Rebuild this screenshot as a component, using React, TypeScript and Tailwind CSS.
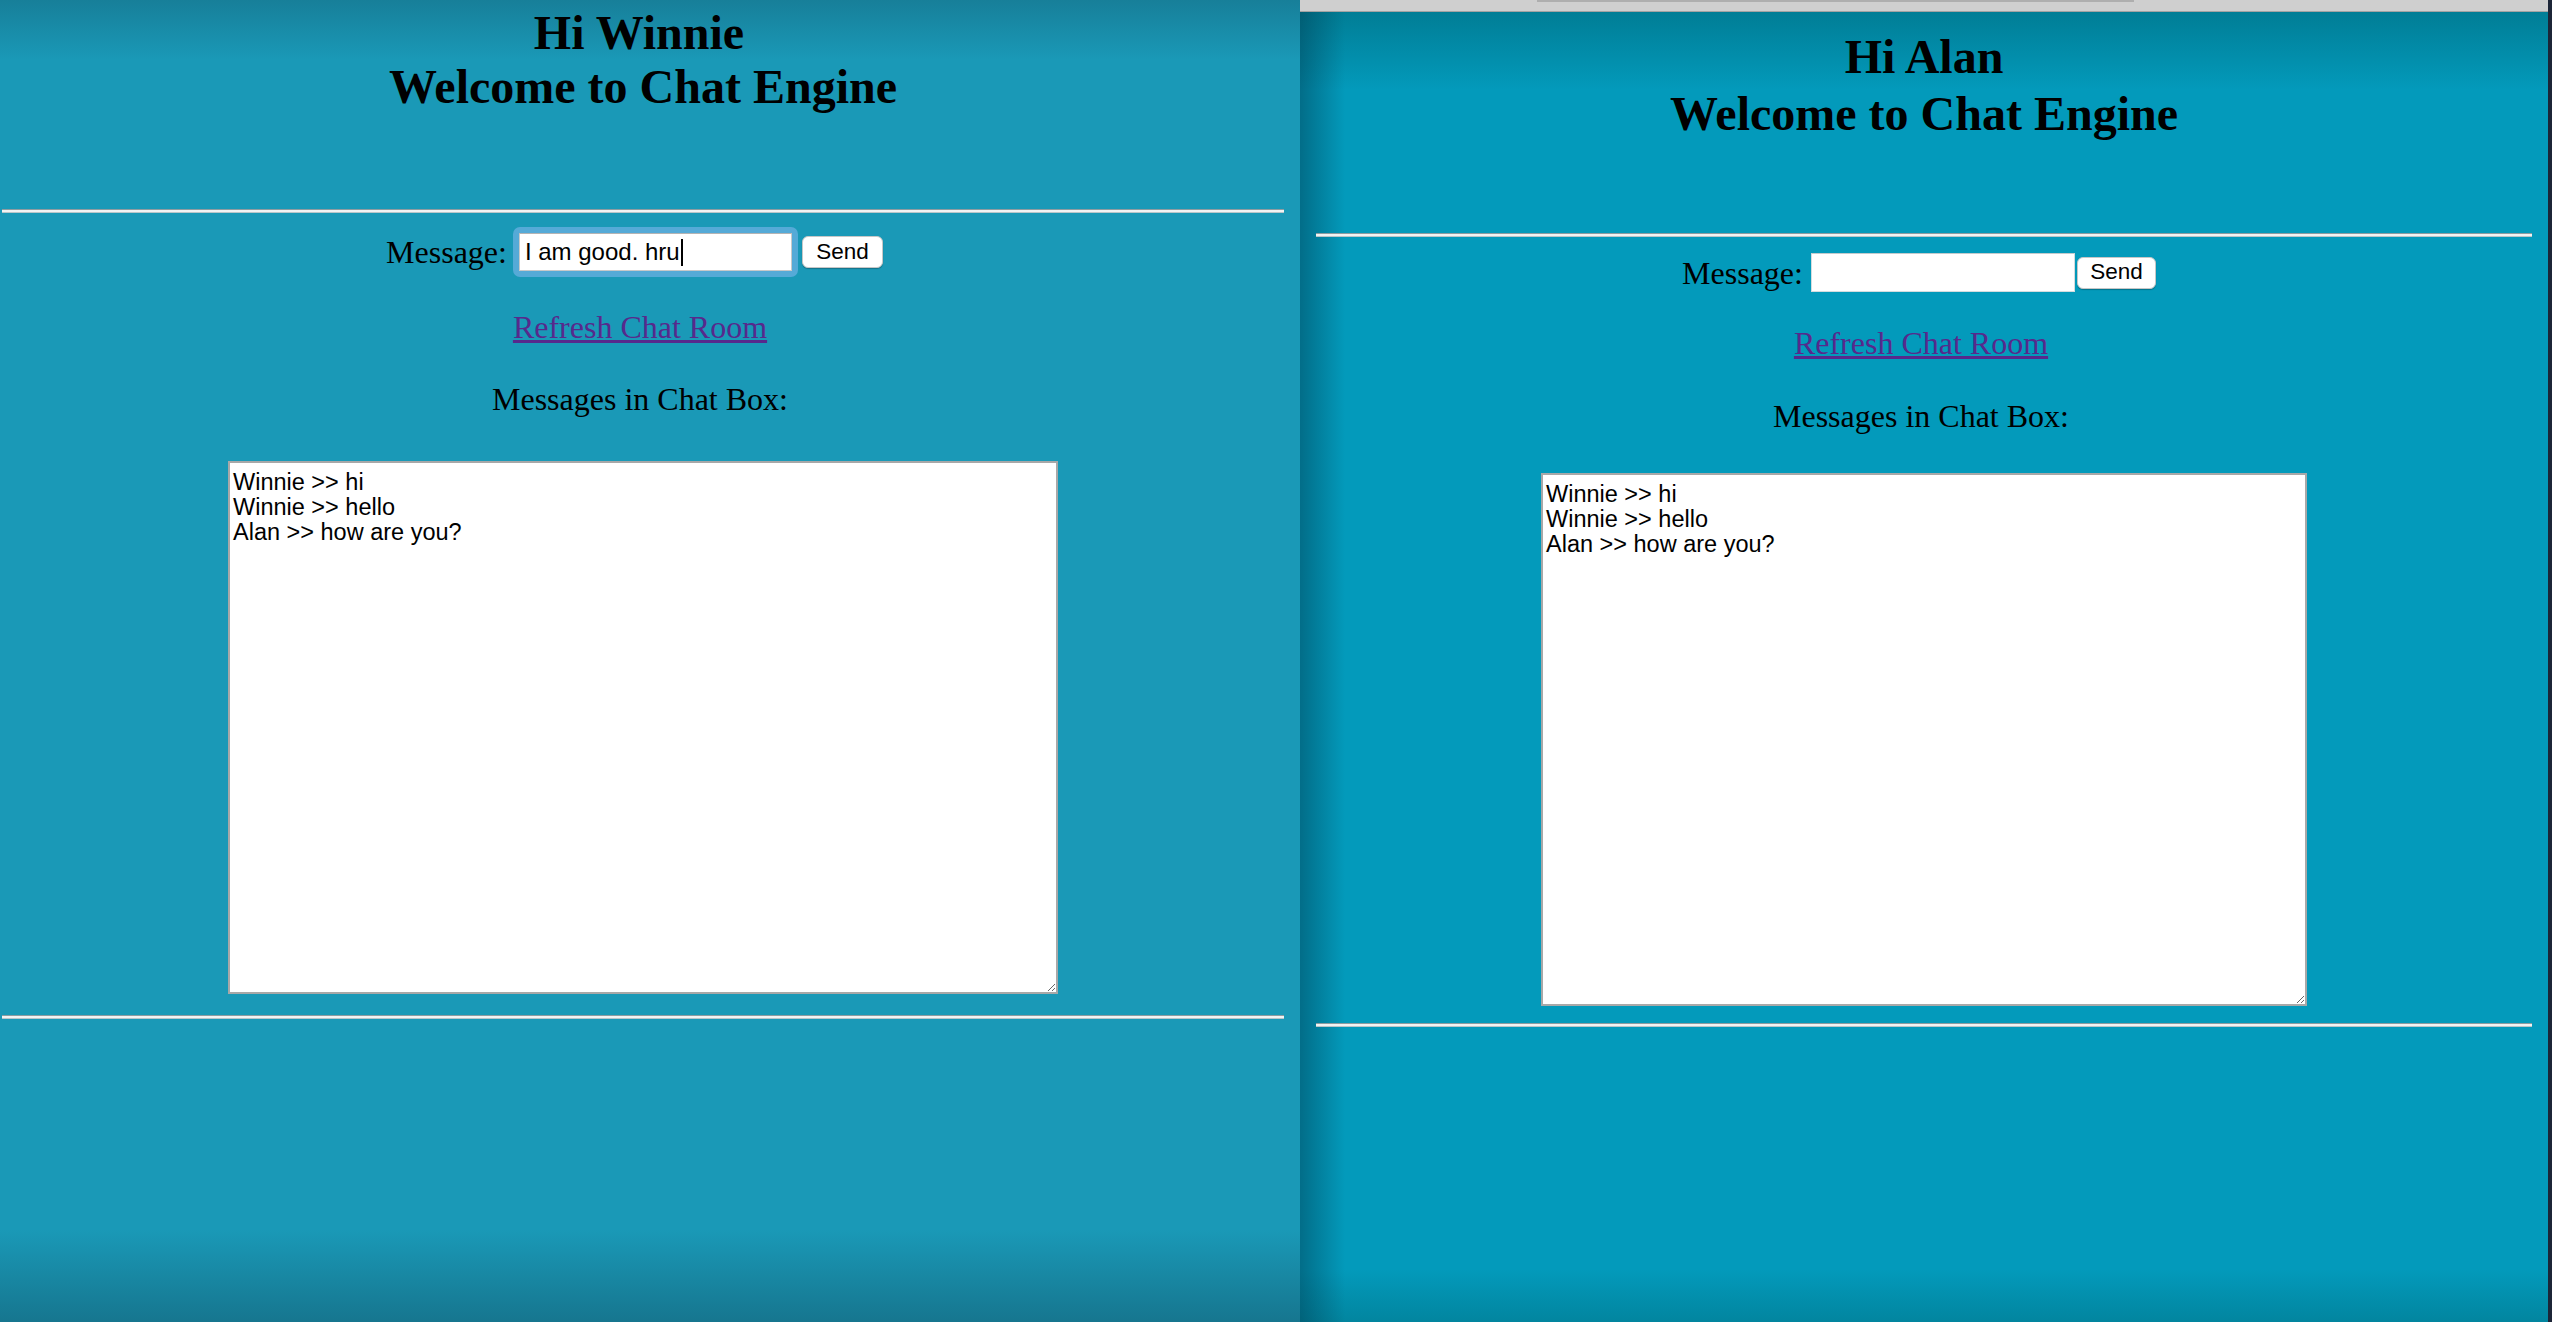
import React from 'react';

const serif = "font-['Liberation_Serif','Times_New_Roman',serif]";
const sans = "font-['Liberation_Sans',Arial,sans-serif]";

const log = 'Winnie >> hi\nWinnie >> hello\nAlan >> how are you?';

function Rule({ className }: { className: string }) {
  return <div className={`h-[4px] border-t border-t-[#8d9ca1] border-b border-b-[#b9c6ca] bg-[#f1f3f3] ${className}`} />;
}

function SendButton({ className }: { className: string }) {
  return (
    <button
      type="button"
      className={`h-[32px] rounded-[6px] border border-[#c7c7c7] bg-white text-[22.5px] leading-none text-black shadow-[0_1px_1px_rgba(0,0,0,0.25)] ${sans} ${className}`}
    >
      Send
    </button>
  );
}

function ChatLog({ className }: { className: string }) {
  return (
    <textarea
      readOnly
      defaultValue={log}
      className={`block h-[533px] resize border-2 border-[#a8a8a8] bg-white pl-[3px] pt-[7px] text-[23.5px] leading-[25px] text-black outline-none ${sans} ${className}`}
    />
  );
}

function WinniePanel() {
  return (
    <div className="h-full w-[1300px] shrink-0 overflow-hidden bg-[linear-gradient(to_bottom,#177f99,#1a99b7_60px,#1a99b7_1230px,#16768f)] pl-[2px] pr-[16px]">
      <div className={`flex flex-col items-center text-black ${serif}`}>
        <h2 className="pt-[6px] text-center text-[48px] font-bold leading-[54px]">
          <span className="block pr-[8px]">Hi Winnie</span>
          Welcome to Chat Engine
        </h2>
        <Rule className="mt-[95px] w-full" />
        <div className="mt-[14px] flex h-[50px] items-center pr-[17px] text-[32px]">
          <span>Message:</span>
          <div className="ml-[6px] rounded-[7px] bg-[#55aad7] p-[6px]">
            <div
              role="textbox"
              className={`flex h-[38px] w-[273px] items-center border border-[#c9c9c9] border-t-[#b4b4b4] bg-white pl-[5px] text-[24px] text-black ${sans}`}
            >
              I am good. hru
              <span className="ml-[1px] h-[27px] w-[2px] bg-black" />
            </div>
          </div>
          <SendButton className="ml-[4px] w-[81px]" />
        </div>
        <a href="#" className="mt-[32px] pr-[6px] text-[32px] leading-[37px] text-[#57298c] underline">
          Refresh Chat Room
        </a>
        <p className="mt-[35px] pr-[6px] text-[32px] leading-[37px]">Messages in Chat Box:</p>
        <ChatLog className="mt-[43px] w-[830px]" />
        <Rule className="mt-[21px] w-full" />
      </div>
    </div>
  );
}

function AlanPanel() {
  return (
    <div className="flex h-full min-w-0 flex-1 flex-col bg-[linear-gradient(to_right,rgba(0,55,75,0.45),rgba(0,55,75,0)_45px),linear-gradient(to_bottom,#007990,#039abb_90px,#039abb_1270px,#02859f)]">
      <div className="flex h-[12px] shrink-0 border-b border-b-[#a3a3a3] bg-[#cfcfcf]">
        <div className="ml-[237px] h-[2px] w-[597px] bg-[#aeaeae]" />
      </div>
      <div className={`flex flex-col items-center px-[16px] text-black ${serif}`}>
        <h2 className="pt-[16px] text-center text-[48px] font-bold leading-[57px]">
          Hi Alan
          <br />
          Welcome to Chat Engine
        </h2>
        <Rule className="mt-[91px] w-full" />
        <div className="mt-[16px] flex h-[39px] items-center pr-[10px] text-[32px]">
          <span>Message:</span>
          <input
            type="text"
            aria-label="Message"
            className={`ml-[8px] h-[39px] w-[264px] border border-[#d4dcde] border-t-[#c2cbcd] bg-white px-[5px] text-[24px] text-black outline-none ${sans}`}
          />
          <SendButton className="ml-[2px] w-[79px]" />
        </div>
        <a href="#" className="mt-[33px] pr-[6px] text-[32px] leading-[37px] text-[#57298c] underline">
          Refresh Chat Room
        </a>
        <p className="mt-[36px] pr-[6px] text-[32px] leading-[37px]">Messages in Chat Box:</p>
        <ChatLog className="mt-[38px] w-[766px]" />
        <Rule className="mt-[17px] w-full" />
      </div>
    </div>
  );
}

export default function App() {
  return (
    <div className="flex h-[1322px] w-full overflow-hidden">
      <WinniePanel />
      <AlanPanel />
      <div className="h-full w-[4px] shrink-0 bg-[#1c2537]" />
    </div>
  );
}
